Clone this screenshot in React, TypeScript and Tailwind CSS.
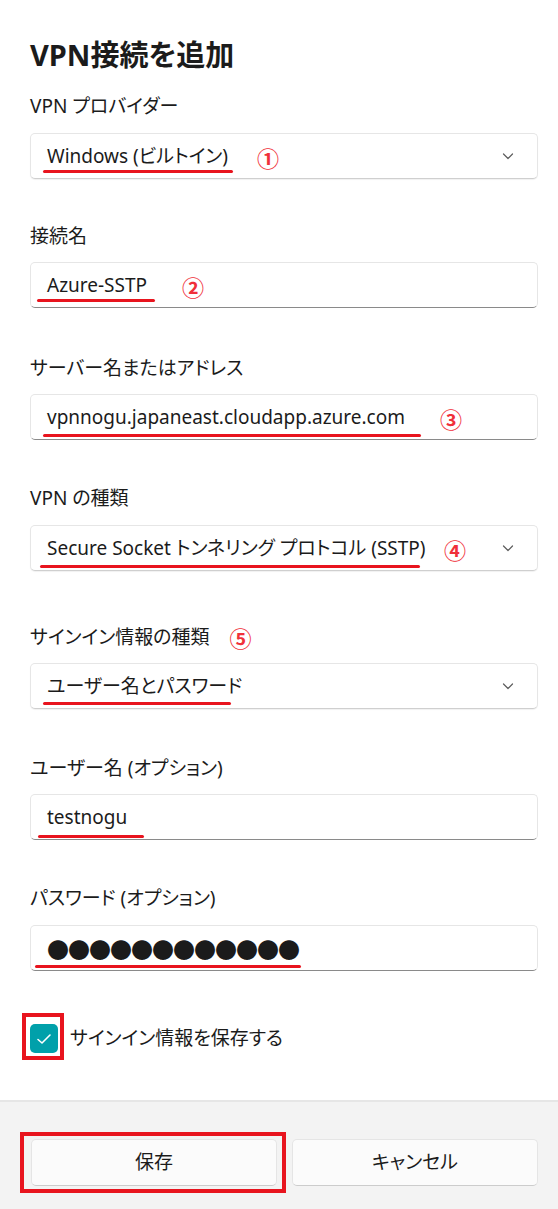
import React from "react";

type Mark = { left: number; top: number; width: number };

const font = "font-['Noto_Sans','Noto_Sans_CJK_JP',sans-serif] [font-feature-settings:'palt']";

const Chevron = () => (
  <svg width="14" height="14" viewBox="0 0 14 14" className="shrink-0">
    <path d="M2.5 5 L7 9.5 L11.5 5" fill="none" stroke="#5c5c5c" strokeWidth="1.2" strokeLinecap="round" strokeLinejoin="round" />
  </svg>
);

const Field = ({
  text,
  combo,
  line,
  num,
  numLeft,
  dots,
  mt,
}: {
  text?: string;
  combo?: boolean;
  line: Mark;
  num?: string;
  numLeft?: number;
  dots?: boolean;
  mt: string;
}) => (
  <div
    className={`relative ${mt} h-[46px] rounded-[5px] bg-white border border-[#e6e6e6] flex items-center pl-[16px] pr-[22px] ${
      combo ? "border-b-[#cfcfcf] shadow-[0_1px_1px_rgba(0,0,0,0.06)]" : "border-b-[#8a8a8a]"
    }`}
  >
    {dots ? (
      <span className="text-[22px] leading-none text-[#1b1b1b] font-['Noto_Sans_CJK_JP',sans-serif] tracking-[-1px]">
        ●●●●●●●●●●●●
      </span>
    ) : (
      <span className="text-[19px] text-[#1b1b1b] whitespace-nowrap">{text}</span>
    )}
    {combo && (
      <div className="ml-auto">
        <Chevron />
      </div>
    )}
    <div
      className="absolute h-[3px] rounded-full bg-[#e8141e]"
      style={{ left: line.left, top: line.top, width: line.width }}
    />
    {num && (
      <span
        className="absolute top-[11px] text-[22px] leading-[24px] font-bold text-[#f0303a] font-['Noto_Sans_CJK_JP',sans-serif]"
        style={{ left: numLeft }}
      >
        {num}
      </span>
    )}
  </div>
);

const Label = ({ children, mt }: { children: React.ReactNode; mt: string }) => (
  <div className={`${mt} h-[26px] flex items-center text-[19px] text-[#1b1b1b]`}>{children}</div>
);

export default function App() {
  return (
    <div className={`w-[558px] h-[1209px] bg-white flex flex-col ${font}`}>
      <div className="flex-1 pl-[30px] pr-[20px] pt-[37px]">
        <h1 className="text-[29px] leading-[36px] font-bold text-[#1b1b1b]">VPN接続を追加</h1>

        <Label mt="mt-[20px]">VPN プロバイダー</Label>
        <Field
          mt="mt-[14px]"
          combo
          text="Windows (ビルトイン)"
          line={{ left: 12, top: 36, width: 190 }}
          num="①"
          numLeft={226}
        />

        <Label mt="mt-[44px]">接続名</Label>
        <Field
          mt="mt-[13px]"
          text="Azure-SSTP"
          line={{ left: 6, top: 36, width: 118 }}
          num="②"
          numLeft={151}
        />

        <Label mt="mt-[47px]">サーバー名またはアドレス</Label>
        <Field
          mt="mt-[13px]"
          text="vpnnogu.japaneast.cloudapp.azure.com"
          line={{ left: 12, top: 39, width: 378 }}
          num="③"
          numLeft={409}
        />

        <Label mt="mt-[45px]">VPN の種類</Label>
        <Field
          mt="mt-[14px]"
          combo
          text="Secure Socket トンネリング プロトコル (SSTP)"
          line={{ left: 9, top: 39, width: 380 }}
          num="④"
          numLeft={413}
        />

        <Label mt="mt-[53px]">
          サインイン情報の種類
          <span className="ml-[20px] text-[22px] font-bold text-[#f0303a] font-['Noto_Sans_CJK_JP',sans-serif]">⑤</span>
        </Label>
        <Field
          mt="mt-[13px]"
          combo
          text="ユーザー名とパスワード"
          line={{ left: 12, top: 38, width: 188 }}
        />

        <Label mt="mt-[46px]">ユーザー名 (オプション)</Label>
        <Field mt="mt-[13px]" text="testnogu" line={{ left: 7, top: 40, width: 106 }} />

        <Label mt="mt-[45px]">パスワード (オプション)</Label>
        <Field mt="mt-[14px]" dots line={{ left: 4, top: 39, width: 266 }} />

        <div className="mt-[53px] flex items-center gap-[12px]">
          <div className="relative w-[28px] h-[29px] rounded-[5px] bg-[#00a0aa] flex items-center justify-center">
            <svg width="20" height="20" viewBox="0 0 20 20">
              <path d="M4 10.5 L8 14 L16 6" fill="none" stroke="white" strokeWidth="1.6" strokeLinecap="round" strokeLinejoin="round" />
            </svg>
            <div className="absolute -left-[8px] -right-[6px] -top-[11px] -bottom-[7px] border-4 border-[#e8141e]" />
          </div>
          <span className="text-[19px] text-[#1b1b1b]">サインイン情報を保存する</span>
        </div>
      </div>

      <div className="h-[109px] bg-[#f3f3f3] border-t-2 border-[#e6e6e6] pt-[37px] pl-[31px] pr-[20px] grid grid-cols-2 gap-[15px] items-start">
        <div className="relative">
          <button className="w-full h-[47px] rounded-[5px] bg-[#fbfbfb] border border-[#e5e5e5] border-b-[#cccccc] text-[19px] text-[#1b1b1b]">
            保存
          </button>
          <div className="absolute -left-[11px] -right-[9px] -top-[7px] -bottom-[7px] border-4 border-[#e8141e]" />
        </div>
        <button className="w-full h-[47px] rounded-[5px] bg-[#fbfbfb] border border-[#e5e5e5] border-b-[#cccccc] text-[19px] text-[#1b1b1b]">
          キャンセル
        </button>
      </div>
    </div>
  );
}
